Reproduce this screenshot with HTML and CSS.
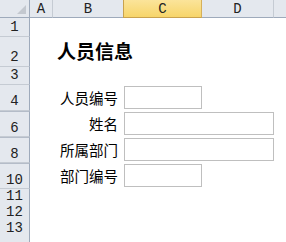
FILE: index.html
```html
<!DOCTYPE html>
<html lang="zh-CN">
<head>
    <meta charset="UTF-8">
    <meta name="viewport" content="width=device-width, initial-scale=1.0">
    <title>人员信息</title>
    <link rel="stylesheet" href="styles.css">
</head>
<body>
    <div class="sheet">
        <div class="row row-head">
            <div class="corner"><span class="tri"></span></div>
            <div class="ch">A</div>
            <div class="ch">B</div>
            <div class="ch active">C</div>
            <div class="ch">D</div>
            <div class="ch"></div>
        </div>

        <div class="row r1">
            <div class="rh">1</div>
        </div>

        <div class="row r2">
            <div class="rh">2</div>
            <div></div>
            <div class="title">人员信息</div>
        </div>

        <div class="row r3">
            <div class="rh">3</div>
        </div>

        <div class="row field">
            <div class="rh">4</div>
            <div></div>
            <div class="label">人员编号</div>
            <div class="box"></div>
        </div>

        <div class="row field">
            <div class="rh hidden-above">6</div>
            <div></div>
            <div class="label">姓名</div>
            <div class="box wide"></div>
        </div>

        <div class="row field">
            <div class="rh hidden-above">8</div>
            <div></div>
            <div class="label">所属部门</div>
            <div class="box wide"></div>
        </div>

        <div class="row field">
            <div class="rh hidden-above">10</div>
            <div></div>
            <div class="label">部门编号</div>
            <div class="box"></div>
        </div>

        <div class="row plain">
            <div class="rh">11</div>
        </div>
        <div class="row plain">
            <div class="rh">12</div>
        </div>
        <div class="row plain">
            <div class="rh">13</div>
        </div>
        <div class="row plain">
            <div class="rh"></div>
        </div>
    </div>
</body>
</html>
```

FILE: styles.css
```css
body {
    margin: 0;
    background-color: #fff;
    font-family: "Noto Sans CJK SC", "Noto Sans", sans-serif;
}

.sheet {
    width: 286px;
    height: 242px;
    overflow: hidden;
}

.row {
    display: grid;
    grid-template-columns: 30px 23px 71px 78px 72px 30px;
}

.row-head { height: 18px; }
.r1 { height: 19px; }
.r2 { height: 30px; }
.r3 { height: 18px; }
.field { height: 26px; }
.plain { height: 16px; }

/* headers */
.corner,
.ch,
.rh {
    box-sizing: border-box;
    background-color: #e4e8ee;
    color: #222;
    font-family: "Liberation Mono", monospace;
    font-size: 14px;
}

.corner {
    position: relative;
    border-right: 1px solid #9eaabb;
    border-bottom: 1px solid #9eaabb;
}

.tri {
    position: absolute;
    right: 3px;
    bottom: 3px;
    width: 0;
    height: 0;
    border-left: 9px solid transparent;
    border-bottom: 9px solid #c3c8cf;
}

.ch {
    display: flex;
    align-items: center;
    justify-content: center;
    border-right: 1px solid #c5cbd3;
    border-bottom: 1px solid #9eaabb;
}

.ch.active {
    background: linear-gradient(#fbe49a, #f7d56a);
    border-left: 1px solid #c9a24e;
    border-right: 1px solid #d6b05a;
    border-bottom: 1px solid #c9a24e;
    margin-left: -1px;
}

.rh {
    display: flex;
    align-items: flex-end;
    justify-content: center;
    padding-bottom: 2px;
    border-right: 1px solid #9eaabb;
    border-bottom: 1px solid #c5cbd3;
    line-height: 1;
}

.rh.hidden-above {
    border-top: 1px solid #b4bcc8;
    padding-bottom: 1px;
}

/* cells */
.title {
    grid-column: span 2;
    align-self: center;
    padding-left: 4px;
    margin-top: -3px;
    font-size: 19px;
    font-weight: bold;
    color: #000;
}

.label {
    align-self: center;
    text-align: right;
    padding-right: 6px;
    font-size: 14.5px;
    color: #000;
    line-height: 1;
}

.box {
    box-sizing: border-box;
    height: 23px;
    margin-top: 1px;
    border: 1px solid #bfbfbf;
    background-color: #fff;
}

.box.wide {
    grid-column: span 2;
}
```
